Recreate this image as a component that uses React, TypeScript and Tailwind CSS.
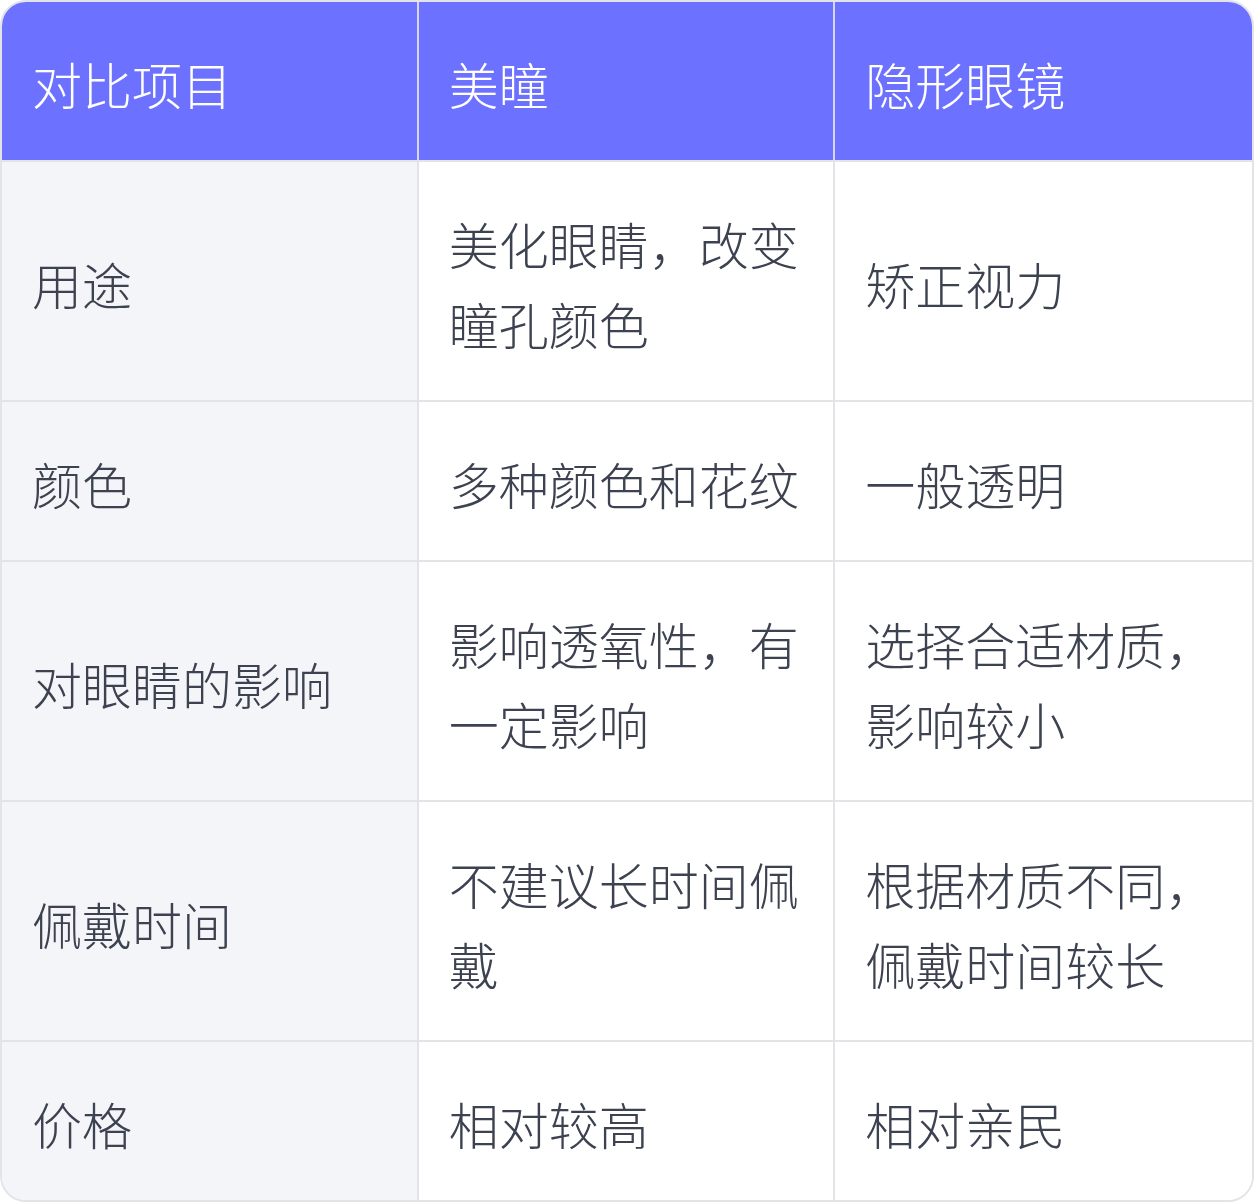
import React from "react";

const rows: [string, string, string][] = [
  ["用途", "美化眼睛，改变瞳孔颜色", "矫正视力"],
  ["颜色", "多种颜色和花纹", "一般透明"],
  ["对眼睛的影响", "影响透氧性，有一定影响", "选择合适材质，影响较小"],
  ["佩戴时间", "不建议长时间佩戴", "根据材质不同，佩戴时间较长"],
  ["价格", "相对较高", "相对亲民"],
];

export default function App() {
  return (
    <div
      className="w-[1254px] bg-white"
      style={{ fontFamily: '"Noto Sans CJK SC", "Noto Sans", sans-serif' }}
    >
      <div className="w-[1254px] border-2 border-[#e3e4e8] rounded-[26px] overflow-hidden">
        <div className="grid grid-cols-3 bg-[#6c72ff] border-b-2 border-[#e3e4e8]">
          {["对比项目", "美瞳", "隐形眼镜"].map((h, i) => (
            <div
              key={h}
              className={`pl-[30px] pr-[24px] pt-[41px] pb-[37px] text-[50px] leading-[80px] text-white font-light ${
                i < 2 ? "border-r-2 border-[#d4d6f5]" : ""
              }`}
            >
              {h}
            </div>
          ))}
        </div>
        {rows.map((r, ri) => (
          <div
            key={ri}
            className={`grid grid-cols-3 ${ri < rows.length - 1 ? "border-b-2 border-[#e3e4e8]" : ""}`}
          >
            {r.map((c, ci) => (
              <div
                key={ci}
                className={`pl-[30px] pr-[24px] pt-[41px] pb-[37px] text-[50px] leading-[80px] text-[#3d4250] font-light flex items-center ${
                  ci === 0 ? "bg-[#f4f5f9]" : "bg-white"
                } ${ci < 2 ? "border-r-2 border-[#e3e4e8]" : ""}`}
              >
                <span>{c}</span>
              </div>
            ))}
          </div>
        ))}
      </div>
    </div>
  );
}
